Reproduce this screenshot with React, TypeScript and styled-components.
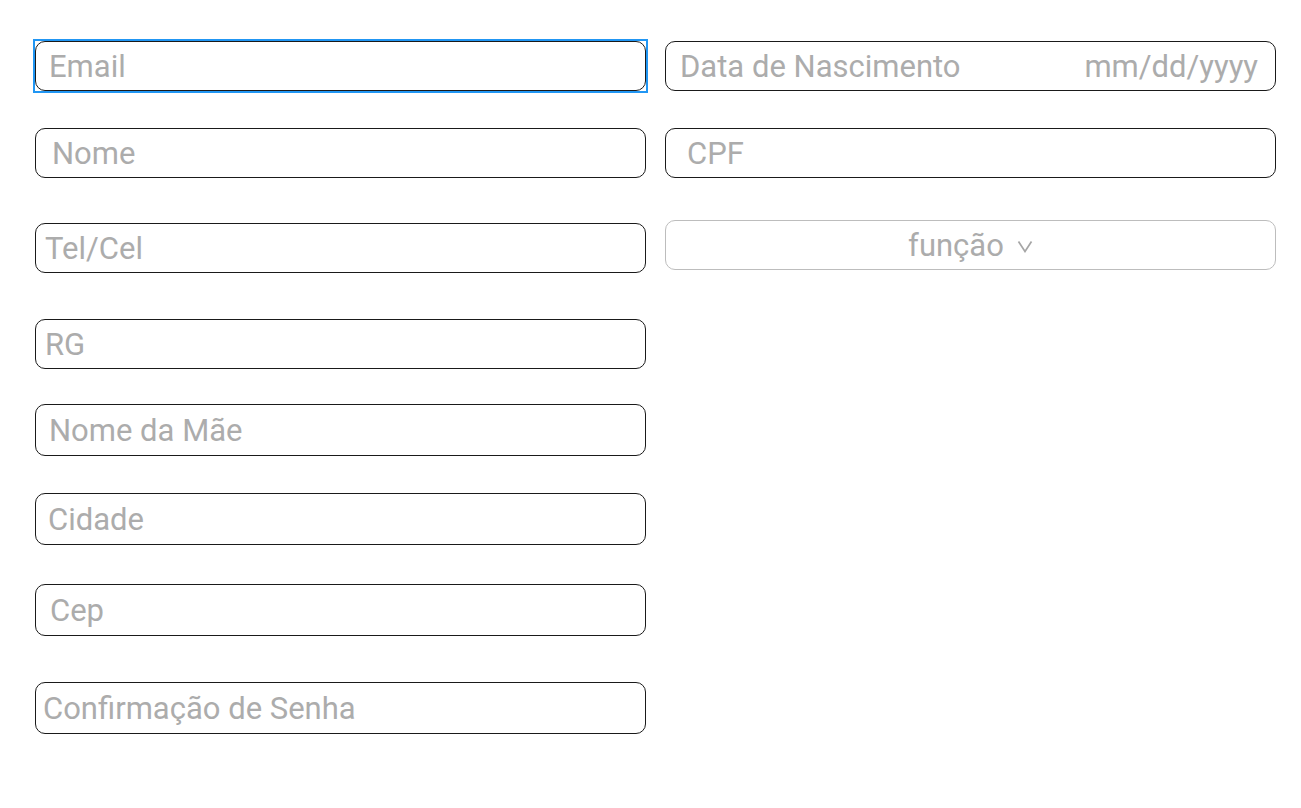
import React from "react";
import styled, { createGlobalStyle } from "styled-components";

const Global = createGlobalStyle`
  html, body { margin: 0; padding: 0; background: #ffffff; }
  body { font-family: Roboto, "Noto Sans", sans-serif; }
`;

const Page = styled.div`
  display: grid;
  grid-template-columns: 611px 611px;
  column-gap: 19px;
  padding: 41px 0 0 35px;
  align-items: start;
`;

const Column = styled.div`
  display: flex;
  flex-direction: column;
`;

const Box = styled.div<{ $top?: number; $h?: number; $light?: boolean; $center?: boolean }>`
  box-sizing: border-box;
  margin-top: ${(p) => p.$top ?? 0}px;
  height: ${(p) => p.$h ?? 50}px;
  border: 1px solid ${(p) => (p.$light ? "#bdbdbd" : "#1a1a1a")};
  border-radius: 10px;
  display: flex;
  align-items: center;
  justify-content: ${(p) => (p.$center ? "center" : "space-between")};
  background: #fff;
`;

const Focus = styled.div`
  margin: -2px;
  border: 2px solid #2196f3;
  display: flex;
  flex-direction: column;
`;

const Hint = styled.span<{ $pad: number }>`
  display: inline-block;
  margin-left: ${(p) => p.$pad}px;
  font-family: Roboto, "Noto Sans", sans-serif;
  font-size: 31px;
  line-height: 1;
  color: #acacac;
  white-space: nowrap;
`;

const DateHint = styled(Hint)`
  margin-left: 0;
  margin-right: 17px;
`;

const Select = styled(Box)`
  gap: 13px;
`;

const Chevron = styled.svg`
  margin-top: 2px;
`;

type F = { label: string; top: number; pad: number; h?: number };

const left: F[] = [
  { label: "Nome", top: 37, pad: 16 },
  { label: "Tel/Cel", top: 45, pad: 9 },
  { label: "RG", top: 46, pad: 9 },
  { label: "Nome da Mãe", top: 35, pad: 13, h: 52 },
  { label: "Cidade", top: 37, pad: 12, h: 52 },
  { label: "Cep", top: 39, pad: 14, h: 52 },
  { label: "Confirmação de Senha", top: 46, pad: 7, h: 52 },
];

export default function App() {
  return (
    <>
      <Global />
      <Page>
        <Column>
          <Focus>
            <Box>
              <Hint $pad={13}>Email</Hint>
            </Box>
          </Focus>
          {left.map((f) => (
            <Box key={f.label} $top={f.top} $h={f.h}>
              <Hint $pad={f.pad}>{f.label}</Hint>
            </Box>
          ))}
        </Column>
        <Column>
          <Box>
            <Hint $pad={14}>Data de Nascimento</Hint>
            <DateHint $pad={0}>mm/dd/yyyy</DateHint>
          </Box>
          <Box $top={37}>
            <Hint $pad={21}>CPF</Hint>
          </Box>
          <Select $top={42} $light $center>
            <Hint $pad={0}>função</Hint>
            <Chevron width="16" height="13" viewBox="0 0 16 13">
              <path d="M1.5 1.5 L8 11.5 L14.5 1.5" fill="none" stroke="#a6a6a6" strokeWidth="1.7" />
            </Chevron>
          </Select>
        </Column>
      </Page>
    </>
  );
}
